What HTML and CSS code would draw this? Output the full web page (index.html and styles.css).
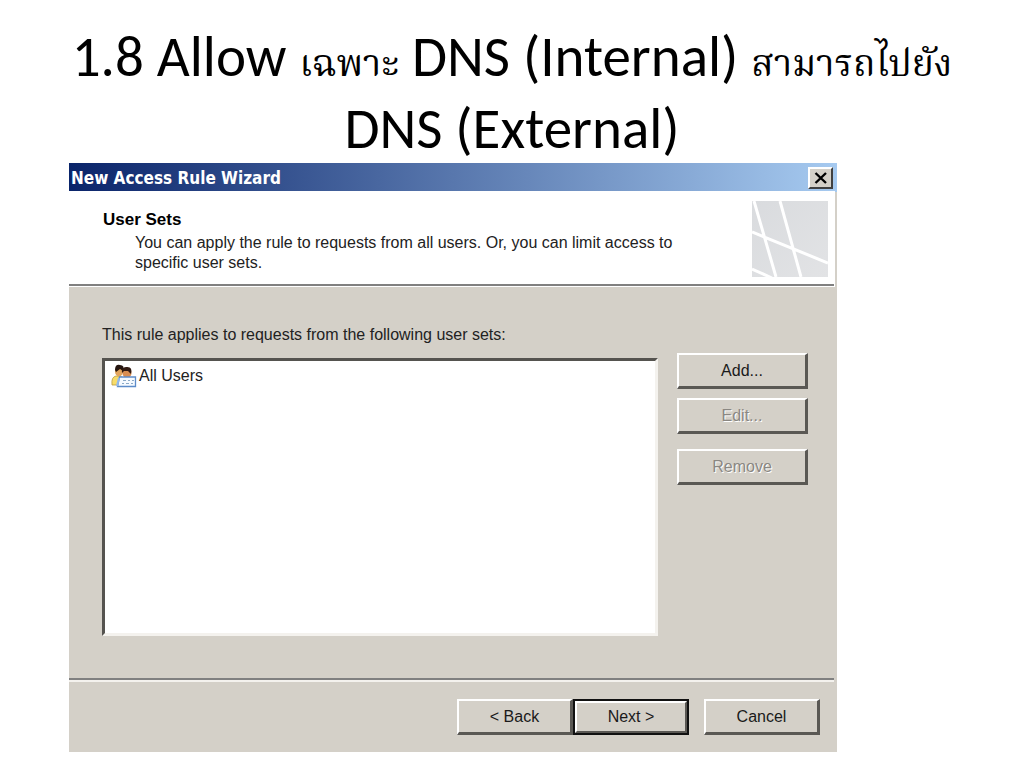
FILE: index.html
```html
<!DOCTYPE html>
<html lang="th">
<head>
<meta charset="utf-8">
<title>New Access Rule Wizard</title>
<link rel="stylesheet" href="styles.css">
</head>
<body>
<h1 class="slide-title">1.8 Allow <span class="thai">เฉพาะ</span> DNS (Internal) <span class="thai">สามารถไปยัง</span> DNS (External)</h1>
<main class="dialog">
  <header class="titlebar">
    <h2 class="titlebar-text">New Access Rule Wizard</h2>
    <button class="close" type="button" aria-label="Close">
      <svg width="14" height="12" viewBox="0 0 14 12"><path d="M1.5 1L12 11M12 1L1.5 11" stroke="#000" stroke-width="2.4" fill="none"/></svg>
    </button>
  </header>
  <section class="banner">
    <div class="banner-text">
      <h3 class="banner-title">User Sets</h3>
      <p class="banner-desc">You can apply the rule to requests from all users. Or, you can limit access to specific user sets.</p>
    </div>
    <svg class="banner-art" width="76" height="76" viewBox="0 0 76 76">
      <defs><linearGradient id="art" x1="0" y1="0" x2="1" y2="1"><stop offset="0" stop-color="#d9dbde"/><stop offset="1" stop-color="#e2e3e5"/></linearGradient></defs>
      <rect width="76" height="76" fill="url(#art)"/>
      <path d="M2 0L24 76M28 0L49 76M0 31L76 62M0 68L20 77" stroke="#fff" stroke-width="3" fill="none"/>
    </svg>
  </section>
  <section class="content">
    <div class="sets">
      <p class="label" id="sets-label">This rule applies to requests from the following user sets:</p>
      <ul class="list" aria-labelledby="sets-label">
        <li class="item">
          <svg width="26" height="24" viewBox="0 0 26 24">
            <path d="M1 21Q0 13 5 12L10 12L13 21Z" fill="#f7dc6a" stroke="#b99a3c" stroke-width=".8"/>
            <ellipse cx="8" cy="7.500" rx="4" ry="5" fill="#e2a55e"/>
            <path d="M4 6Q4 0 9 1Q14 1 12 7L9 5L5 8Z" fill="#25150f"/>
            <path d="M7 22Q7 15 12 14L20 14L22 22Z" fill="#77a9e8"/>
            <ellipse cx="16" cy="9" rx="4.500" ry="5" fill="#d98e52"/>
            <path d="M11 9Q10 3 15 3Q22 2 20 10L17 7L13 7Z" fill="#321b12"/>
            <path d="M8.500 13H24.500V22.500H6.500Z" fill="#f5faff" stroke="#5d8cc9" stroke-width="1.300"/>
            <path d="M12 16.500h3m2 0h2m2 0h2M11 19.500h2m2 0h3m2 0h2" stroke="#8baac8" stroke-width="1.200"/>
            <path d="M8 14L6 22" stroke="#91b8ee" stroke-width="2"/>
          </svg>
          <span>All Users</span>
        </li>
      </ul>
    </div>
    <div class="actions">
      <button class="btn" type="button">Add...</button>
      <button class="btn" type="button" disabled>Edit...</button>
      <button class="btn btn-remove" type="button" disabled>Remove</button>
    </div>
  </section>
  <footer class="footer">
    <div class="nav">
      <button class="btn" type="button">&lt; Back</button>
      <button class="btn btn-default" type="button">Next &gt;</button>
    </div>
    <button class="btn" type="button">Cancel</button>
  </footer>
</main>
</body>
</html>
```
FILE: styles.css
```css
* { box-sizing: border-box; }
body {
  margin: 0;
  background: #fff;
  color: #000;
  font: 16px/20px "Liberation Sans", Arial, sans-serif;
}
h1, h2, h3, p, ul { margin: 0; padding: 0; }
.slide-title {
  margin-bottom: -2px;
  padding: 21px 64px 0;
  text-align: center;
  font: 400 57px/72px Carlito, Calibri, Lato, sans-serif;
}
.thai { font-family: "Angsana New", "Norasi", "Noto Serif Thai", serif; font-size: 37px; line-height: 40px; }
.dialog {
  width: 75%;
  margin-left: 69px;
  background: #d4d0c8;
}
.titlebar {
  display: flex;
  align-items: center;
  justify-content: space-between;
  height: 29px;
  padding: 0 4px 0 2px;
  background: linear-gradient(90deg, #0a246a, #a6caf0);
}
.titlebar-text {
  color: #fff;
  font: 700 17px/28px "DejaVu Sans Condensed", "DejaVu Sans", sans-serif;
}
.close {
  display: grid;
  place-items: center;
  width: 25px;
  height: 22px;
  padding: 0;
  background: #d4d0c8;
  border: 2px solid;
  border-color: #fff #404040 #404040 #fff;
}
.banner {
  display: flex;
  justify-content: space-between;
  margin-right: 3px;
  padding: 9px 6px 7px 34px;
  background: #fff;
  border-bottom: 2px solid #808080;
  outline: 1px solid #fff;
}
.banner-title { padding-top: 8px; font-size: 17px; line-height: 22px; }
.banner-desc { max-width: 592px; padding-top: 2px; padding-left: 32px; padding-right: 8px; line-height: 20px; color: #222; }
.banner-art { flex: none; }
.content {
  display: flex;
  gap: 19px;
  padding: 39px 29px 42px 33px;
}
.sets { flex: 1; }
.label { line-height: 20px; color: #222; }
.list {
  height: 278px;
  margin-top: 13px;
  padding: 2px 6px;
  list-style: none;
  background: #fff;
  border: 3px solid;
  border-color: #55534f #f4f2ee #f4f2ee #55534f;
}
.item { display: flex; align-items: center; gap: 2px; height: 25px; color: #222; }
.actions { display: flex; flex-direction: column; gap: 9px; width: 131px; padding-top: 28px; }
.btn {
  height: 36px;
  padding: 0;
  font: 16px/20px "Liberation Sans", Arial, sans-serif;
  color: #1a1a1a;
  background: #d4d0c8;
  border: 2px solid;
  border-color: #fff #5a5854 #5a5854 #fff;
  border-right-width: 3px;
  border-bottom-width: 3px;
}
.btn:disabled { color: #8a8782; text-shadow: 1px 1px 0 #fff; }
.btn-remove { margin-top: 6px; }
.footer {
  display: flex;
  justify-content: flex-end;
  gap: 15px;
  margin-right: 3px;
  padding: 19px 14px 17px;
  border-top: 2px solid #808080;
  box-shadow: inset 0 2px #f4f2ee;
}
.nav { display: flex; }
.footer .btn { width: 116px; }
.footer .btn-default { border-color: #fff #5a5854 #5a5854 #fff; outline: 2px solid #111; outline-offset: -2px; border-width: 4px; }
```
